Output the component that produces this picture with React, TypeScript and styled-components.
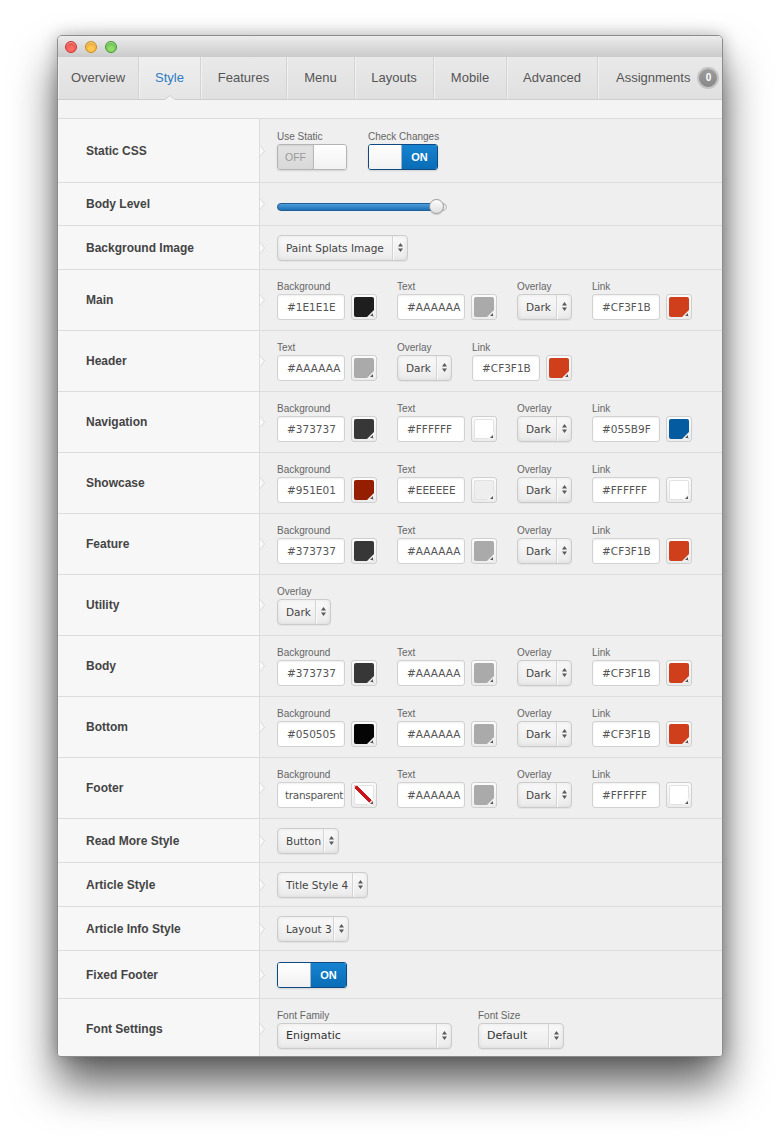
import React from "react";
import styled, { createGlobalStyle, css } from "styled-components";

const GlobalStyle = createGlobalStyle`
  html, body { margin: 0; padding: 0; background: #ffffff; }
  body { font-family: "Liberation Sans", Arial, sans-serif; }
`;

const Page = styled.div`
  padding: 35px 0 80px 57px;
`;

const Window = styled.div`
  width: 666px;
  height: 1022px;
  box-sizing: border-box;
  border: 1px solid #8c8c8c;
  border-radius: 5px 5px 4px 4px;
  overflow: hidden;
  background: #efefef;
  display: flex;
  flex-direction: column;
  box-shadow: 0 28px 44px rgba(0, 0, 0, 0.62), 0 0 16px rgba(0, 0, 0, 0.25);
`;

const TitleBar = styled.div`
  height: 21px;
  flex: none;
  display: flex;
  align-items: center;
  gap: 8px;
  padding-left: 7px;
  background: linear-gradient(#ececec, #cbcbcb);
`;

const Light = styled.span<{ $c: string; $d: string }>`
  width: 12px;
  height: 12px;
  border-radius: 50%;
  box-sizing: border-box;
  border: 1px solid ${(p) => p.$d};
  background: radial-gradient(circle at 50% 70%, ${(p) => p.$c} 30%, ${(p) => p.$d} 100%);
  box-shadow: inset 0 1px 1px rgba(255, 255, 255, 0.6);
`;

const TabBar = styled.div`
  height: 42px;
  flex: none;
  display: flex;
  border-bottom: 1px solid #cdcdcd;
  background: linear-gradient(#e9e9e9, #e0e0e0);
`;

const Tab = styled.div<{ $w?: number; $active?: boolean }>`
  ${(p) => (p.$w ? css`width: ${p.$w}px; flex: none;` : css`flex: 1;`)}
  box-sizing: border-box;
  display: flex;
  align-items: center;
  justify-content: ${(p) => (p.$w ? "center" : "flex-start")};
  padding-left: ${(p) => (p.$w ? "0" : "18px")};
  padding-bottom: 1px;
  gap: 7px;
  border-right: 1px solid #d3d3d3;
  box-shadow: inset 1px 0 0 #f1f1f1;
  font-size: 13px;
  color: ${(p) => (p.$active ? "#2b7cc0" : "#555555")};
  position: relative;
  ${(p) =>
    p.$active &&
    css`
      background: linear-gradient(#efefef, #e5e5e5);
      &::before {
        content: "";
        position: absolute;
        left: 50%;
        bottom: -1px;
        margin-left: -6px;
        border-style: solid;
        border-width: 0 6px 5px 6px;
        border-color: transparent transparent #cdcdcd transparent;
      }
      &::after {
        content: "";
        position: absolute;
        left: 50%;
        bottom: -1px;
        margin-left: -5px;
        border-style: solid;
        border-width: 0 5px 4px 5px;
        border-color: transparent transparent #f4f4f4 transparent;
      }
    `}
  &:last-child {
    border-right: none;
  }
`;

const Badge = styled.span`
  width: 22px;
  height: 22px;
  box-sizing: border-box;
  border-radius: 50%;
  border: 2px solid #c4c4c4;
  background: linear-gradient(#9c9c9c, #888888);
  color: #ffffff;
  font-size: 10px;
  font-weight: bold;
  display: flex;
  align-items: center;
  justify-content: center;
`;

const Strip = styled.div`
  height: 18px;
  flex: none;
  background: #f4f4f4;
  border-bottom: 1px solid #dcdcdc;
`;

const Row = styled.div<{ $h: number }>`
  display: flex;
  height: ${(p) => p.$h}px;
  flex: none;
  border-bottom: 1px solid #dcdcdc;
`;

const LabelCell = styled.div`
  width: 202px;
  flex: none;
  box-sizing: border-box;
  background: #f7f7f7;
  border-right: 1px solid #dcdcdc;
  display: flex;
  align-items: center;
  padding-left: 28px;
  font-size: 12px;
  font-weight: bold;
  color: #444444;
  position: relative;
  &::before {
    content: "";
    position: absolute;
    right: -6px;
    top: 50%;
    margin-top: -6px;
    border-style: solid;
    border-width: 6px 0 6px 5px;
    border-color: transparent transparent transparent #d6d6d6;
    z-index: 1;
  }
  &::after {
    content: "";
    position: absolute;
    right: -5px;
    top: 50%;
    margin-top: -5px;
    border-style: solid;
    border-width: 5px 0 5px 4px;
    border-color: transparent transparent transparent #fafafa;
    z-index: 2;
  }
`;

const ControlCell = styled.div<{ $gap?: number }>`
  flex: 1;
  display: flex;
  align-items: center;
  gap: ${(p) => p.$gap ?? 20}px;
  padding-left: 17px;
  background: #efefef;
`;

const Field = styled.div`
  display: flex;
  flex-direction: column;
`;

const FieldLabel = styled.div`
  font-size: 10px;
  line-height: 12px;
  margin-bottom: 1px;
  color: #666666;
  white-space: nowrap;
`;

const ColorPair = styled.div`
  display: flex;
  gap: 6px;
`;

const ColorInput = styled.div<{ $tight?: boolean }>`
  width: 68px;
  height: 26px;
  box-sizing: border-box;
  border: 1px solid #d2d2d2;
  border-radius: 3px;
  background: #ffffff;
  box-shadow: inset 0 1px 2px rgba(0, 0, 0, 0.07);
  padding-left: ${(p) => (p.$tight ? "7px" : "9px")};
  letter-spacing: ${(p) => (p.$tight ? "-0.3px" : "0")};
  font-family: "DejaVu Sans", Verdana, sans-serif;
  font-size: 10.5px;
  line-height: 24px;
  color: #555555;
  white-space: nowrap;
  overflow: hidden;
`;

const Swatch = styled.div`
  width: 26px;
  height: 26px;
  box-sizing: border-box;
  border: 1px solid #cfcfcf;
  border-radius: 3px;
  padding: 2px;
  background: linear-gradient(#fbfbfb, #ececec);
`;

const SwatchFill = styled.div<{ $c: string }>`
  width: 100%;
  height: 100%;
  border-radius: 2px;
  position: relative;
  overflow: hidden;
  background: ${(p) =>
    p.$c === "transparent"
      ? "linear-gradient(to top right, #ffffff calc(50% - 1.6px), #c8141b calc(50% - 1.6px), #c8141b calc(50% + 1.6px), #ffffff calc(50% + 1.6px))"
      : p.$c};
  box-shadow: ${(p) =>
    p.$c === "#FFFFFF" || p.$c === "#EEEEEE" || p.$c === "transparent"
      ? "inset 0 0 0 1px #e2e2e2"
      : "none"};
  &::after {
    content: "";
    position: absolute;
    right: 0;
    bottom: 0;
    border-style: solid;
    border-width: 0 0 7px 7px;
    border-color: transparent transparent #f3f3f3 transparent;
  }
  &::before {
    content: "";
    position: absolute;
    right: 1px;
    bottom: 1px;
    border-style: solid;
    border-width: 0 0 3px 3px;
    border-color: transparent transparent #555555 transparent;
    z-index: 1;
  }
`;

const SelectBox = styled.div<{ $w: number }>`
  width: ${(p) => p.$w}px;
  height: 26px;
  box-sizing: border-box;
  display: flex;
  align-items: stretch;
  border: 1px solid #cbcbcb;
  border-radius: 4px;
  background: linear-gradient(#f9f9f9, #ebebeb);
  box-shadow: inset 0 0 4px rgba(0, 0, 0, 0.08), 0 1px 1px rgba(0, 0, 0, 0.05);
  font-family: "DejaVu Sans", Verdana, sans-serif;
  font-size: 10.5px;
  color: #444444;
`;

const SelectText = styled.div<{ $strong?: boolean }>`
  flex: 1;
  display: flex;
  align-items: center;
  padding-left: 8px;
  white-space: nowrap;
  overflow: hidden;
  font-size: ${(p) => (p.$strong ? "11px" : "10.5px")};
  color: ${(p) => (p.$strong ? "#333333" : "#444444")};
`;

const SelectArrow = styled.div`
  width: 14px;
  flex: none;
  display: flex;
  align-items: center;
  justify-content: center;
  border-left: 1px solid #d3d3d3;
  box-shadow: inset 1px 0 0 #fafafa;
`;

const ToggleBox = styled.div<{ $on: boolean }>`
  width: 70px;
  height: 26px;
  box-sizing: border-box;
  display: flex;
  border: 1px solid ${(p) => (p.$on ? "#0d4a83" : "#b4b4b4")};
  border-radius: 3px;
  overflow: hidden;
  box-shadow: 0 1px 2px rgba(0, 0, 0, 0.12);
`;

const ToggleText = styled.div<{ $on: boolean }>`
  width: 35px;
  flex: none;
  display: flex;
  align-items: center;
  justify-content: center;
  font-size: ${(p) => (p.$on ? "11px" : "10.5px")};
  font-weight: ${(p) => (p.$on ? "bold" : "normal")};
  color: ${(p) => (p.$on ? "#ffffff" : "#9a9a9a")};
  background: ${(p) =>
    p.$on ? "linear-gradient(#1683d0, #0a6cb6)" : "linear-gradient(#e3e3e3, #d9d9d9)"};
  box-shadow: ${(p) => (p.$on ? "none" : "inset 0 1px 2px rgba(0,0,0,0.08)")};
`;

const ToggleKnob = styled.div<{ $on: boolean }>`
  flex: 1;
  background: linear-gradient(#ffffff, #f1f1f1);
  ${(p) => (p.$on ? "border-right: 1px solid #9fb3c6;" : "border-left: 1px solid #b9b9b9;")}
`;

const SliderTrack = styled.div`
  width: 170px;
  height: 8px;
  margin-top: 6px;
  box-sizing: border-box;
  border: 1px solid #b8b8b8;
  border-radius: 4px;
  background: linear-gradient(#e4e4e4, #f4f4f4);
  position: relative;
`;

const SliderFill = styled.div`
  height: 100%;
  margin: -1px 0 0 -1px;
  box-sizing: content-box;
  border: 1px solid #1f5f99;
  border-radius: 4px;
  background: linear-gradient(#4d9ddb, #1f70b4);
`;

const SliderKnob = styled.div`
  position: absolute;
  width: 15px;
  height: 15px;
  top: -5px;
  box-sizing: border-box;
  border-radius: 50%;
  border: 1px solid #9a9a9a;
  background: linear-gradient(#fdfdfd, #dedede);
  box-shadow: 0 1px 1px rgba(0, 0, 0, 0.15);
`;

const Arrows = () => (
  <svg width="5" height="9" viewBox="0 0 5 9">
    <path d="M2.5 0 L5 3.4 H0 Z M0 5.6 H5 L2.5 9 Z" fill="#5a5a5a" />
  </svg>
);

const Select = ({ value, w, strong }: { value: string; w: number; strong?: boolean }) => (
  <SelectBox $w={w}>
    <SelectText $strong={strong}>{value}</SelectText>
    <SelectArrow>
      <Arrows />
    </SelectArrow>
  </SelectBox>
);

const Toggle = ({ on }: { on: boolean }) => (
  <ToggleBox $on={on}>
    {on ? (
      <>
        <ToggleKnob $on />
        <ToggleText $on>ON</ToggleText>
      </>
    ) : (
      <>
        <ToggleText $on={false}>OFF</ToggleText>
        <ToggleKnob $on={false} />
      </>
    )}
  </ToggleBox>
);

type Item =
  | { kind: "color"; label: string; value: string; color: string }
  | { kind: "select"; label?: string; value: string; w: number; strong?: boolean }
  | { kind: "toggle"; label?: string; on: boolean }
  | { kind: "slider" };

type RowDef = { name: string; h: number; gap?: number; items: Item[] };

const c = (label: string, value: string, color?: string): Item => ({
  kind: "color",
  label,
  value,
  color: color ?? value,
});
const ov: Item = { kind: "select", label: "Overlay", value: "Dark", w: 55 };

const rows: RowDef[] = [
  {
    name: "Static CSS",
    h: 63,
    gap: 21,
    items: [
      { kind: "toggle", label: "Use Static", on: false },
      { kind: "toggle", label: "Check Changes", on: true },
    ],
  },
  { name: "Body Level", h: 42, items: [{ kind: "slider" }] },
  { name: "Background Image", h: 43, items: [{ kind: "select", value: "Paint Splats Image", w: 131 }] },
  { name: "Main", h: 60, items: [c("Background", "#1E1E1E"), c("Text", "#AAAAAA"), ov, c("Link", "#CF3F1B")] },
  { name: "Header", h: 60, items: [c("Text", "#AAAAAA"), ov, c("Link", "#CF3F1B")] },
  { name: "Navigation", h: 60, items: [c("Background", "#373737"), c("Text", "#FFFFFF"), ov, c("Link", "#055B9F")] },
  { name: "Showcase", h: 60, items: [c("Background", "#951E01"), c("Text", "#EEEEEE"), ov, c("Link", "#FFFFFF")] },
  { name: "Feature", h: 60, items: [c("Background", "#373737"), c("Text", "#AAAAAA"), ov, c("Link", "#CF3F1B")] },
  { name: "Utility", h: 60, items: [{ kind: "select", label: "Overlay", value: "Dark", w: 54 }] },
  { name: "Body", h: 60, items: [c("Background", "#373737"), c("Text", "#AAAAAA"), ov, c("Link", "#CF3F1B")] },
  { name: "Bottom", h: 60, items: [c("Background", "#050505"), c("Text", "#AAAAAA"), ov, c("Link", "#CF3F1B")] },
  { name: "Footer", h: 60, items: [c("Background", "transparent"), c("Text", "#AAAAAA"), ov, c("Link", "#FFFFFF")] },
  { name: "Read More Style", h: 43, items: [{ kind: "select", value: "Button", w: 62 }] },
  { name: "Article Style", h: 43, items: [{ kind: "select", value: "Title Style 4", w: 91 }] },
  { name: "Article Info Style", h: 43, items: [{ kind: "select", value: "Layout 3", w: 72 }] },
  { name: "Fixed Footer", h: 47, items: [{ kind: "toggle", on: true }] },
  {
    name: "Font Settings",
    h: 60,
    gap: 26,
    items: [
      { kind: "select", label: "Font Family", value: "Enigmatic", w: 175, strong: true },
      { kind: "select", label: "Font Size", value: "Default", w: 86, strong: true },
    ],
  },
];

const tabs: { name: string; w?: number }[] = [
  { name: "Overview", w: 81 },
  { name: "Style", w: 62 },
  { name: "Features", w: 86 },
  { name: "Menu", w: 68 },
  { name: "Layouts", w: 79 },
  { name: "Mobile", w: 73 },
  { name: "Advanced", w: 91 },
  { name: "Assignments" },
];

const renderItem = (it: Item, i: number) => {
  let control: React.ReactNode = null;
  let label: string | undefined;
  if (it.kind === "color") {
    label = it.label;
    control = (
      <ColorPair>
        <ColorInput $tight={it.value.length > 7}>{it.value}</ColorInput>
        <Swatch>
          <SwatchFill $c={it.color} />
        </Swatch>
      </ColorPair>
    );
  } else if (it.kind === "select") {
    label = it.label;
    control = <Select value={it.value} w={it.w} strong={it.strong} />;
  } else if (it.kind === "toggle") {
    label = it.label;
    control = <Toggle on={it.on} />;
  } else {
    control = (
      <SliderTrack>
        <SliderFill style={{ width: 158 }} />
        <SliderKnob style={{ left: 151 }} />
      </SliderTrack>
    );
  }
  return (
    <Field key={i}>
      {label && <FieldLabel>{label}</FieldLabel>}
      {control}
    </Field>
  );
};

export default function App() {
  return (
    <>
      <GlobalStyle />
      <Page>
        <Window>
          <TitleBar>
            <Light $c="#ff6b63" $d="#c9302c" />
            <Light $c="#ffc750" $d="#d08a17" />
            <Light $c="#8fdc6a" $d="#3e9a2b" />
          </TitleBar>
          <TabBar>
            {tabs.map((t) => (
              <Tab key={t.name} $w={t.w} $active={t.name === "Style"}>
                {t.name}
                {!t.w && <Badge>0</Badge>}
              </Tab>
            ))}
          </TabBar>
          <Strip />
          {rows.map((r) => (
            <Row key={r.name} $h={r.h}>
              <LabelCell>{r.name}</LabelCell>
              <ControlCell $gap={r.gap}>{r.items.map(renderItem)}</ControlCell>
            </Row>
          ))}
        </Window>
      </Page>
    </>
  );
}
